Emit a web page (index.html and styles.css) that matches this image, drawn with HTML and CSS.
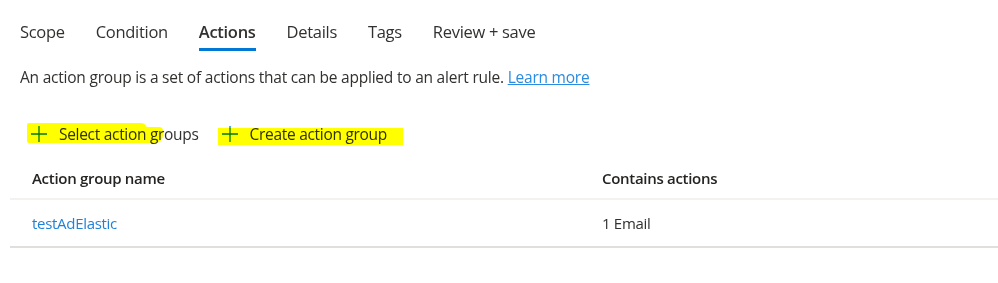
FILE: index.html
```html
<!DOCTYPE html>
<html>
<head>
<meta charset="utf-8">
<link rel="stylesheet" href="styles.css">
</head>
<body>
<div class="page">
  <nav class="tabs">
    <span class="tab">Scope</span>
    <span class="tab">Condition</span>
    <span class="tab active">Actions</span>
    <span class="tab">Details</span>
    <span class="tab">Tags</span>
    <span class="tab">Review + save</span>
  </nav>
  <p class="desc">An action group is a set of actions that can be applied to an alert rule. <a class="link" href="#">Learn more</a></p>
  <div class="toolbar">
    <button class="cmd cmd-select">
      <span class="mark mark-select"></span>
      <svg class="plus" width="18" height="18" viewBox="0 0 18 18"><path d="M9 1v16M1 9h16" stroke="#0078d4" stroke-width="1.3" fill="none"/></svg>
      <span class="label">Select action groups</span>
    </button>
    <button class="cmd cmd-create">
      <span class="mark mark-create"></span>
      <svg class="plus" width="18" height="18" viewBox="0 0 18 18"><path d="M9 1v16M1 9h16" stroke="#0078d4" stroke-width="1.3" fill="none"/></svg>
      <span class="label">Create action group</span>
    </button>
  </div>
  <div class="table">
    <div class="row head">
      <div class="cell c1">Action group name</div>
      <div class="cell c2">Contains actions</div>
    </div>
    <div class="row body">
      <div class="cell c1"><a class="link name" href="#">testAdElastic</a></div>
      <div class="cell c2">1 Email</div>
    </div>
  </div>
</div>
</body>
</html>
```
FILE: styles.css
```css
* { box-sizing: border-box; }
html, body { margin: 0; padding: 0; background: #fff; }
body {
  font-family: "Open Sans", "Noto Sans", sans-serif;
  color: #323130;
}
.page { padding: 0 0 0 10px; }
.tabs {
  display: flex;
  padding: 15px 0 0 10px;
  gap: 31px;
}
.tab {
  font-size: 16.5px;
  line-height: 33px;
  color: #323130;
  border-bottom: 3px solid transparent;
  letter-spacing: -0.3px;
}
.tab.active {
  font-weight: 600;
  border-bottom-color: #0078d4;
}
.desc {
  margin: 15px 0 0 10px;
  font-size: 15.5px;
  line-height: 22px;
  letter-spacing: -0.22px;
}
.link { color: #0078d4; }
.desc .link { color: #2a8ce0; text-decoration: underline; }
.toolbar {
  display: flex;
  margin: 32px 0 0 14px;
  gap: 16px;
  height: 28px;
  align-items: center;
}
.cmd {
  position: relative;
  display: flex;
  align-items: center;
  gap: 11px;
  background: none;
  border: 0;
  padding: 0 0 0 6px;
  font: inherit;
  font-size: 15.5px;
  letter-spacing: -0.3px;
  color: #323130;
}
.cmd .plus, .cmd .label { position: relative; }
.mark {
  position: absolute;
  background: #ffff00;
  mix-blend-mode: multiply;
  z-index: 1;
  pointer-events: none;
}
.mark-select {
  left: 3px; top: 0; width: 120px; height: 20px;
  border-radius: 2px 6px 2px 2px;
}
.mark-select::after {
  content: "";
  position: absolute;
  left: 110px; top: 4px; width: 26px; height: 16px;
  background: #ffff00;
  border-radius: 6px 4px 8px 0;
}
.mark-create {
  left: 3px; top: 5px; width: 185px; height: 17px;
}
.table {
  margin-top: 9px;
}
.row {
  display: flex;
  align-items: center;
}
.row.head {
  height: 43px;
  font-weight: 600;
  color: #252423;
  border-bottom: 2px solid #f3f2f1;
}
.row.body {
  height: 48px;
  border-bottom: 2px solid #e1dfdd;
}
.cell {
  font-size: 15px;
  letter-spacing: -0.3px;
}
.c1 { width: 592px; padding-left: 22px; }
.c2 { flex: 1; }
.name { text-decoration: none; color: #1e83d8; }
```
